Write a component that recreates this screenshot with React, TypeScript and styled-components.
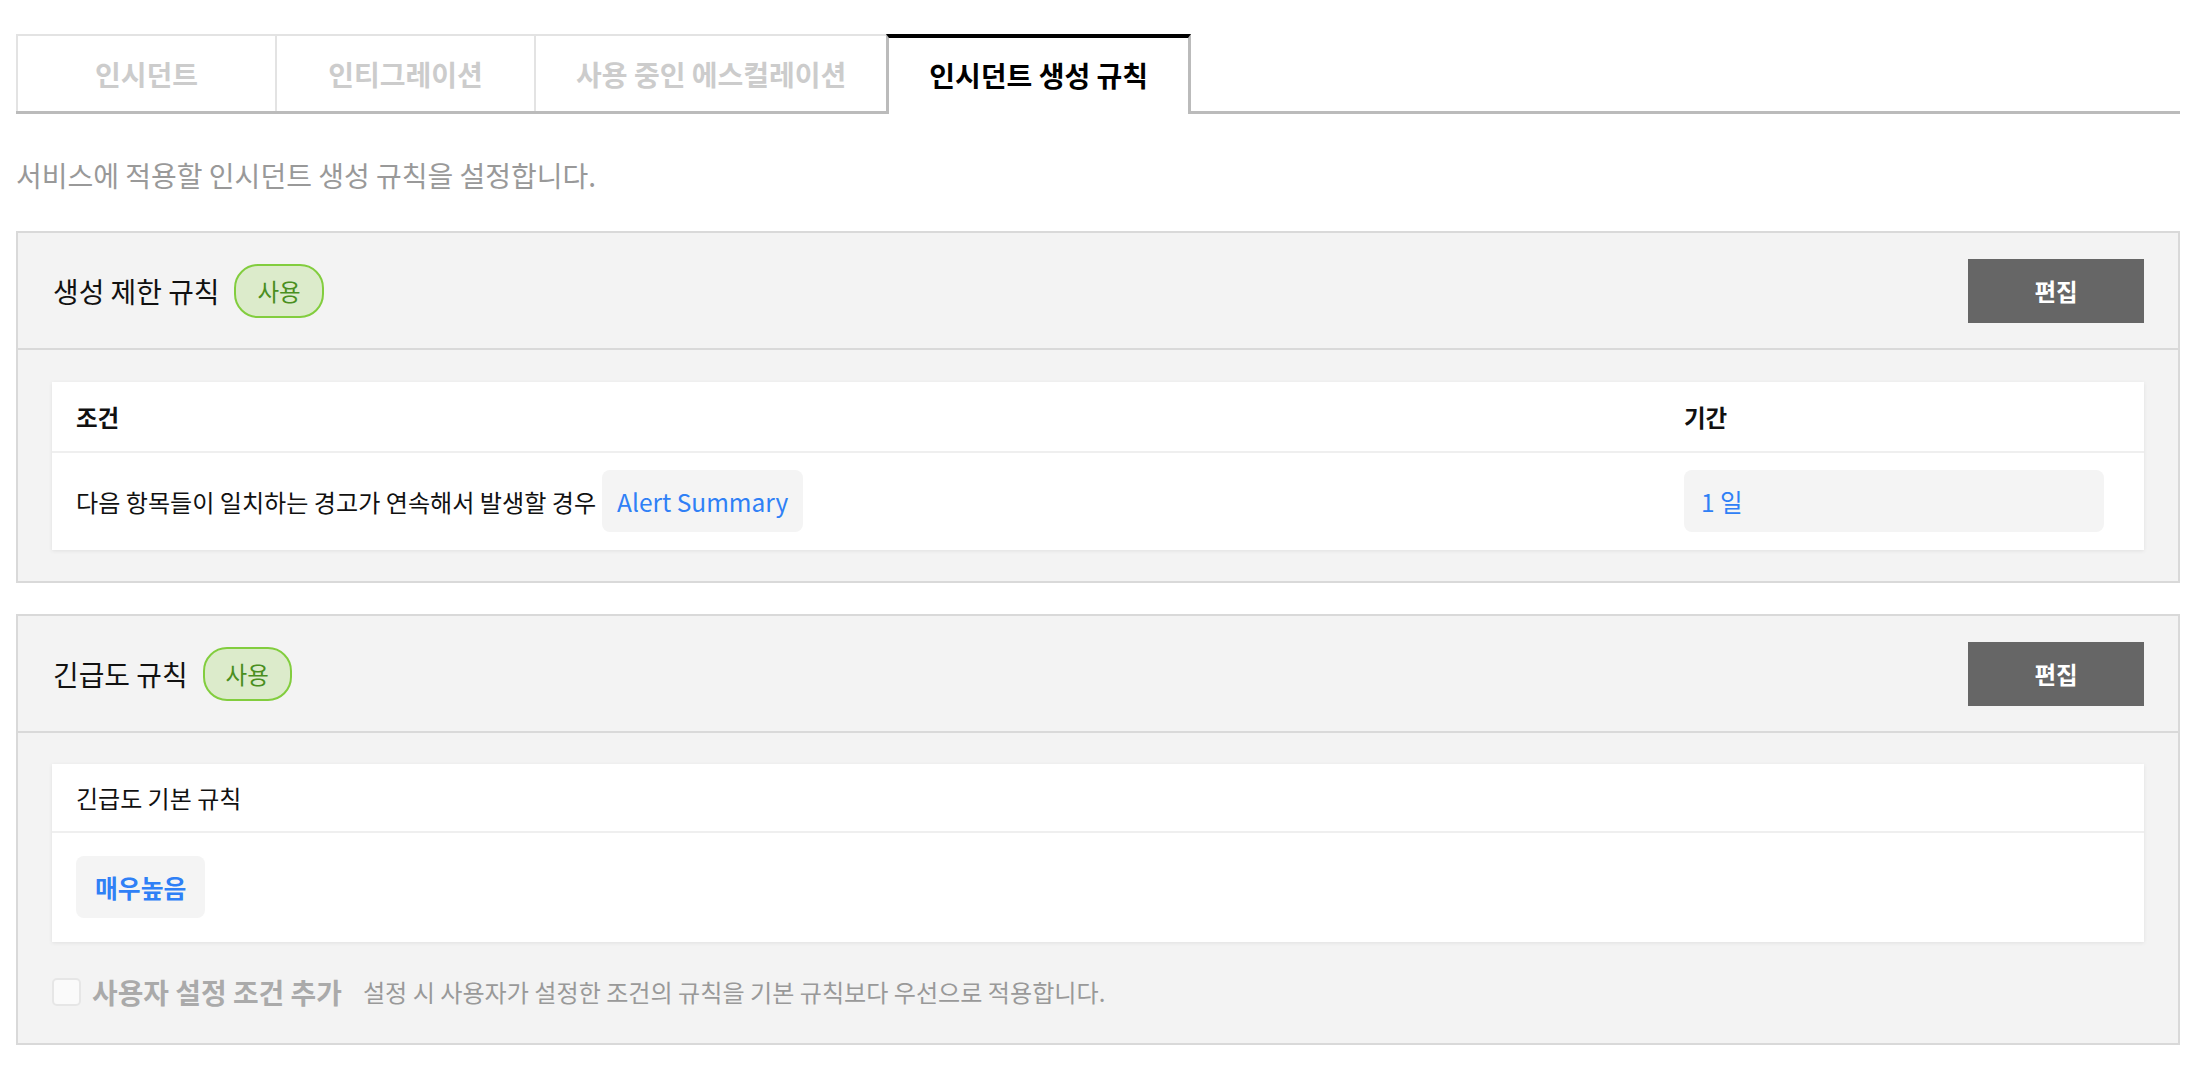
import React from 'react';
import styled, { createGlobalStyle, css } from 'styled-components';

const GlobalStyle = createGlobalStyle`
  body {
    margin: 0;
    background: #fff;
    font-family: "Noto Sans CJK KR", "Noto Sans", sans-serif;
    color: #111;
  }
`;

const Page = styled.div`
  padding: 34px 28px 0 16px;
`;

const TabBar = styled.div`
  display: flex;
  height: 77px;
  border-bottom: 3px solid #bbb;
`;

const Tab = styled.div<{ $active?: boolean }>`
  box-sizing: border-box;
  min-width: 259px;
  padding: 0 40px;
  display: flex;
  align-items: center;
  justify-content: center;
  font-size: 28px;
  font-weight: 700;
  color: #ccc;
  border-top: 2px solid #e3e3e3;
  border-right: 2px solid #e3e3e3;

  &:first-child {
    min-width: 261px;
    border-left: 2px solid #e3e3e3;
  }

  ${(p) =>
    p.$active &&
    css`
      color: #000;
      background: #fff;
      height: 80px;
      margin-bottom: -3px;
      margin-left: -2px;
      padding-bottom: 3px;
      border-top: 4px solid #000;
      border-left: 3px solid #bbb;
      border-right: 3px solid #bbb;
    `}
`;

const Desc = styled.p`
  margin: 0;
  padding-top: 43px;
  line-height: 36px;
  font-size: 28px;
  color: #999;
`;

const Panel = styled.section<{ $gap: number }>`
  margin-top: ${(p) => p.$gap}px;
  border: 2px solid #d9d9d9;
  background: #f3f3f3;
`;

const PanelHeader = styled.div`
  display: flex;
  align-items: center;
  height: 115px;
  padding: 0 34px 0 35px;
  border-bottom: 2px solid #d9d9d9;
`;

const PanelTitle = styled.h2`
  margin: 0;
  font-size: 27.9px;
  font-weight: 400;
  color: #111;
`;

const Badge = styled.span`
  box-sizing: border-box;
  display: inline-flex;
  align-items: center;
  height: 54px;
  margin-left: 15px;
  padding: 0 21px;
  border: 2px solid #82cd3e;
  border-radius: 24px;
  background: #dcebcb;
  color: #4a8f1f;
  font-size: 23.5px;
`;

const EditButton = styled.button`
  margin-left: auto;
  width: 176px;
  height: 64px;
  border: none;
  background: #666;
  color: #fff;
  font-family: inherit;
  font-size: 23.5px;
  font-weight: 700;
`;

const PanelBody = styled.div<{ $top: number }>`
  padding: ${(p) => p.$top}px 34px 0;
`;

const Card = styled.div<{ $last?: boolean }>`
  background: #fff;
  box-shadow: 0 1px 4px rgba(0, 0, 0, 0.08);
  margin-bottom: ${(p) => (p.$last ? 0 : 31)}px;
`;

const HeadRow = styled.div<{ $height: number; $bold?: boolean }>`
  display: grid;
  grid-template-columns: 1fr 436px;
  align-items: center;
  height: ${(p) => p.$height}px;
  padding: 0 24px;
  border-bottom: 2px solid #efefef;
  font-size: ${(p) => (p.$bold ? 23.5 : 24)}px;
  font-weight: ${(p) => (p.$bold ? 700 : 400)};
  color: #111;
`;

const BodyRow = styled.div<{ $pad: number }>`
  display: grid;
  grid-template-columns: 1fr 436px;
  align-items: center;
  padding: ${(p) => p.$pad}px 24px ${(p) => p.$pad + 1}px;
`;

const Cell = styled.div`
  display: flex;
  align-items: center;
  gap: 6px;
  font-size: 24.1px;
  color: #111;
`;

const Chip = styled.span<{ $bold?: boolean; $wide?: boolean }>`
  box-sizing: border-box;
  display: inline-flex;
  align-items: center;
  height: 62px;
  padding: 0 ${(p) => (p.$bold ? 19 : 15)}px;
  border-radius: 8px;
  background: #f4f4f4;
  color: #2f80f6;
  font-size: ${(p) => (p.$bold ? 24.8 : 24.5)}px;
  font-weight: ${(p) => (p.$bold ? 700 : 400)};
  ${(p) =>
    p.$wide &&
    css`
      width: 420px;
      padding-left: 17px;
    `}
`;

const CheckRow = styled.label`
  display: flex;
  align-items: center;
  height: 28px;
  padding: 36px 0 37px;
  line-height: 28px;
`;

const CheckBox = styled.span`
  box-sizing: border-box;
  width: 29px;
  height: 28px;
  border: 2px solid #e6e6e6;
  border-radius: 5px;
  background: #fafafa;
`;

const CheckLabel = styled.span`
  margin-left: 11px;
  font-size: 27.9px;
  font-weight: 700;
  color: #aaa;
`;

const CheckHint = styled.span`
  margin-left: 21px;
  font-size: 24.1px;
  color: #999;
`;

const tabs = ['인시던트', '인티그레이션', '사용 중인 에스컬레이션', '인시던트 생성 규칙'];

export default function App() {
  return (
    <Page>
      <GlobalStyle />
      <TabBar>
        {tabs.map((t, i) => (
          <Tab key={t} $active={i === 3}>
            {t}
          </Tab>
        ))}
      </TabBar>
      <Desc>서비스에 적용할 인시던트 생성 규칙을 설정합니다.</Desc>

      <Panel $gap={38}>
        <PanelHeader>
          <PanelTitle>생성 제한 규칙</PanelTitle>
          <Badge>사용</Badge>
          <EditButton>편집</EditButton>
        </PanelHeader>
        <PanelBody $top={32}>
          <Card>
            <HeadRow $height={69} $bold>
              <div>조건</div>
              <div>기간</div>
            </HeadRow>
            <BodyRow $pad={17}>
              <Cell>
                다음 항목들이 일치하는 경고가 연속해서 발생할 경우
                <Chip>Alert Summary</Chip>
              </Cell>
              <Cell>
                <Chip $wide>1 일</Chip>
              </Cell>
            </BodyRow>
          </Card>
        </PanelBody>
      </Panel>

      <Panel $gap={31}>
        <PanelHeader>
          <PanelTitle>긴급도 규칙</PanelTitle>
          <Badge>사용</Badge>
          <EditButton>편집</EditButton>
        </PanelHeader>
        <PanelBody $top={31}>
          <Card $last>
            <HeadRow $height={67}>
              <div>긴급도 기본 규칙</div>
            </HeadRow>
            <BodyRow $pad={23}>
              <Cell>
                <Chip $bold>매우높음</Chip>
              </Cell>
            </BodyRow>
          </Card>
          <CheckRow>
            <CheckBox />
            <CheckLabel>사용자 설정 조건 추가</CheckLabel>
            <CheckHint>설정 시 사용자가 설정한 조건의 규칙을 기본 규칙보다 우선으로 적용합니다.</CheckHint>
          </CheckRow>
        </PanelBody>
      </Panel>
    </Page>
  );
}
